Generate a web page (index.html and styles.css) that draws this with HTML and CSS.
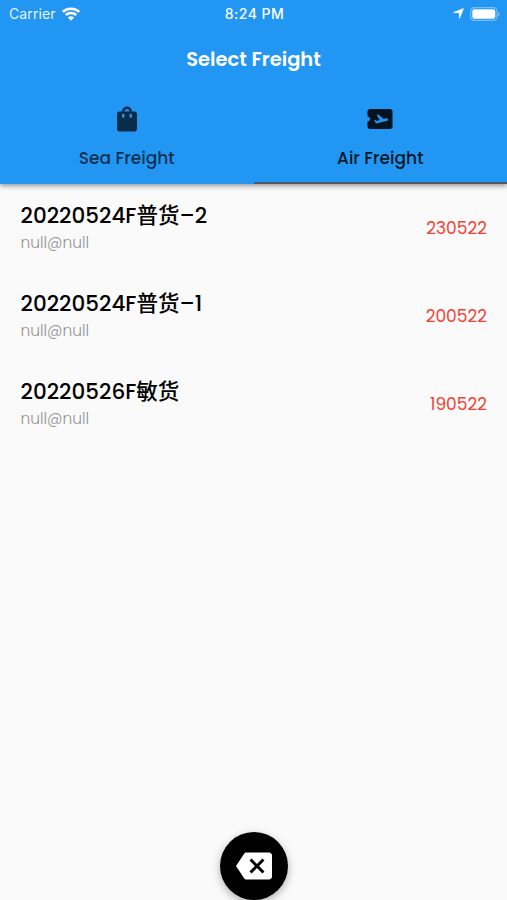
FILE: index.html
```html
<!DOCTYPE html>
<html lang="en">
<head>
  <meta charset="UTF-8" />
  <meta name="viewport" content="width=device-width, initial-scale=1.0"/>
  <title>Select Freight</title>
  <link rel="stylesheet" href="styles.css">
</head>
<body>
  <header class="app-bar">
    <div class="status-bar">
      <div class="status-left">
        <span class="carrier">Carrier</span>
        <svg viewBox="0 0 18 14" width="18" height="14">
          <path d="M.8 4.800C5.300.6 12.700.6 17.200 4.800M3.700 8c3-2.800 7.600-2.800 10.600 0" fill="none" stroke="#fff" stroke-width="2.500"/>
          <path d="M5.900 10.500c1.900-1.600 4.300-1.600 6.200 0L9 13.700z" fill="#fff"/>
        </svg>
      </div>
      <span class="time">8:24 PM</span>
      <div class="status-right">
        <svg width="11" height="11" viewBox="0 0 12 12"><path d="M11.300.700L7 11.300V5H.700z" fill="#fff" stroke="#fff" stroke-width="1" stroke-linejoin="round"/></svg>
        <svg width="30" height="14" viewBox="0 0 30 14">
          <rect x=".6" y=".6" width="26.400" height="12.800" rx="3.800" fill="none" stroke="#fff" stroke-opacity=".4" stroke-width="1.200"/>
          <rect x="2.300" y="2.300" width="23" height="9.400" rx="2.200" fill="#fff"/>
          <path d="M28.300 4.700c1.700.8 1.700 3.800 0 4.600z" fill="#fff" fill-opacity=".5"/>
        </svg>
      </div>
    </div>
    <h1>Select Freight</h1>
    <nav class="tabs">
      <a class="tab">
        <svg width="30" height="30" viewBox="0 0 24 24" fill="currentColor"><path d="M18 6h-2c0-2.210-1.790-4-4-4S8 3.790 8 6H6c-1.100 0-2 .9-2 2v12c0 1.100.9 2 2 2h12c1.100 0 2-.9 2-2V8c0-1.100-.9-2-2-2zm-8 4c0 .55-.45 1-1 1s-1-.45-1-1V8h2v2zm2-6c1.100 0 2 .9 2 2h-4c0-1.100.9-2 2-2zm4 6c0 .55-.45 1-1 1s-1-.45-1-1V8h2v2z"/></svg>
        <span class="label">Sea Freight</span>
      </a>
      <a class="tab active">
        <svg width="30" height="30" viewBox="0 0 24 24" fill="currentColor"><path d="M20.190 4H4c-1.100 0-1.990.9-1.990 2v4c1.100 0 1.990.9 1.990 2s-.89 2-2 2v4c0 1.100.9 2 2 2h16.190c.99 0 1.810-.82 1.810-1.810V5.810C22 4.820 21.180 4 20.190 4zm-2.460 9.300l-8.860 2.360-1.660-2.880.93-.25 1.260.99 2.390-.64-2.400-4.160 1.400-.38 4.010 3.740 2.440-.65c.51-.14 1.040.17 1.180.68.13.51-.17 1.040-.69 1.190z"/></svg>
        <span class="label">Air Freight</span>
      </a>
    </nav>
  </header>

  <main class="list">
    <div class="row">
      <div>
        <div class="name">20220524F普货–2</div>
        <div class="sub">null@null</div>
      </div>
      <div class="code">230522</div>
    </div>
    <div class="row">
      <div>
        <div class="name">20220524F普货–1</div>
        <div class="sub">null@null</div>
      </div>
      <div class="code">200522</div>
    </div>
    <div class="row">
      <div>
        <div class="name">20220526F敏货</div>
        <div class="sub">null@null</div>
      </div>
      <div class="code">190522</div>
    </div>
  </main>

  <button class="fab" aria-label="Back">
    <svg width="36" height="36" viewBox="0 0 24 24" fill="#fff"><path d="M22 3H7c-.69 0-1.230.35-1.590.88L0 12l5.410 8.110c.36.53.9.89 1.590.89h15c1.100 0 2-.9 2-2V5c0-1.100-.9-2-2-2zm-3 12.590L17.590 17 14 13.410 10.410 17 9 15.590 12.590 12 9 8.410 10.410 7 14 10.590 17.590 7 19 8.410 15.410 12 19 15.590z"/></svg>
  </button>
</body>
</html>
```
FILE: styles.css
```css
* {
  box-sizing: border-box;
}
body {
  margin: 0;
  height: 100vh;
  display: flex;
  flex-direction: column;
  overflow: hidden;
  background: #fafafa;
  color: #000;
  font-family: Poppins, Inter, "Noto Sans CJK SC", sans-serif;
}
.app-bar {
  height: 184px;
  flex: none;
  background: #2196f3;
  box-shadow: 0 2px 5px rgba(0,0,0,0.4);
}
.status-bar {
  height: 27px;
  display: grid;
  grid-template-columns: 1fr auto 1fr;
  align-items: center;
  padding: 0 7px 0 9px;
  color: #fff;
  font-family: Inter, sans-serif;
  font-size: 14px;
}
.status-left, .status-right {
  display: flex;
  align-items: center;
  gap: 6px;
}
.status-right {
  justify-content: flex-end;
}
.carrier {
  letter-spacing: 0.1px;
  opacity: 0.9;
}
.time {
  font-weight: 500;
  font-size: 14px;
  letter-spacing: 0.45px;
}
h1 {
  margin: 0;
  height: 64px;
  line-height: 65px;
  text-align: center;
  color: #fff;
  font-size: 19.5px;
  font-weight: 600;
}
.tabs {
  display: flex;
  height: 93px;
}
.tab {
  flex: 1;
  display: flex;
  flex-direction: column;
  align-items: center;
  padding-top: 13px;
  color: rgba(0,0,0,0.7);
  border-bottom: 2px solid transparent;
}
.tab.active {
  color: rgba(0,0,0,0.87);
  border-bottom-color: #4d5964;
}
.label {
  margin-top: 13px;
  line-height: 22px;
  font-size: 17px;
  font-weight: 500;
}
.row {
  display: flex;
  justify-content: space-between;
  align-items: center;
  height: 88px;
  padding: 0 20px 0 20.5px;
}
.name {
  line-height: 30px;
  font-size: 21.5px;
  font-weight: 500;
}
.sub {
  line-height: 24px;
  font-size: 15.4px;
  font-weight: 300;
  color: #929292;
}
.code {
  font-size: 17px;
  color: #f44336;
}
.fab {
  width: 68px;
  height: 68px;
  margin: auto auto 0;
  display: flex;
  align-items: center;
  justify-content: center;
  padding: 0;
  border: none;
  border-radius: 50%;
  background: #000;
  box-shadow: 0 3px 8px rgba(0,0,0,0.3);
}
```
